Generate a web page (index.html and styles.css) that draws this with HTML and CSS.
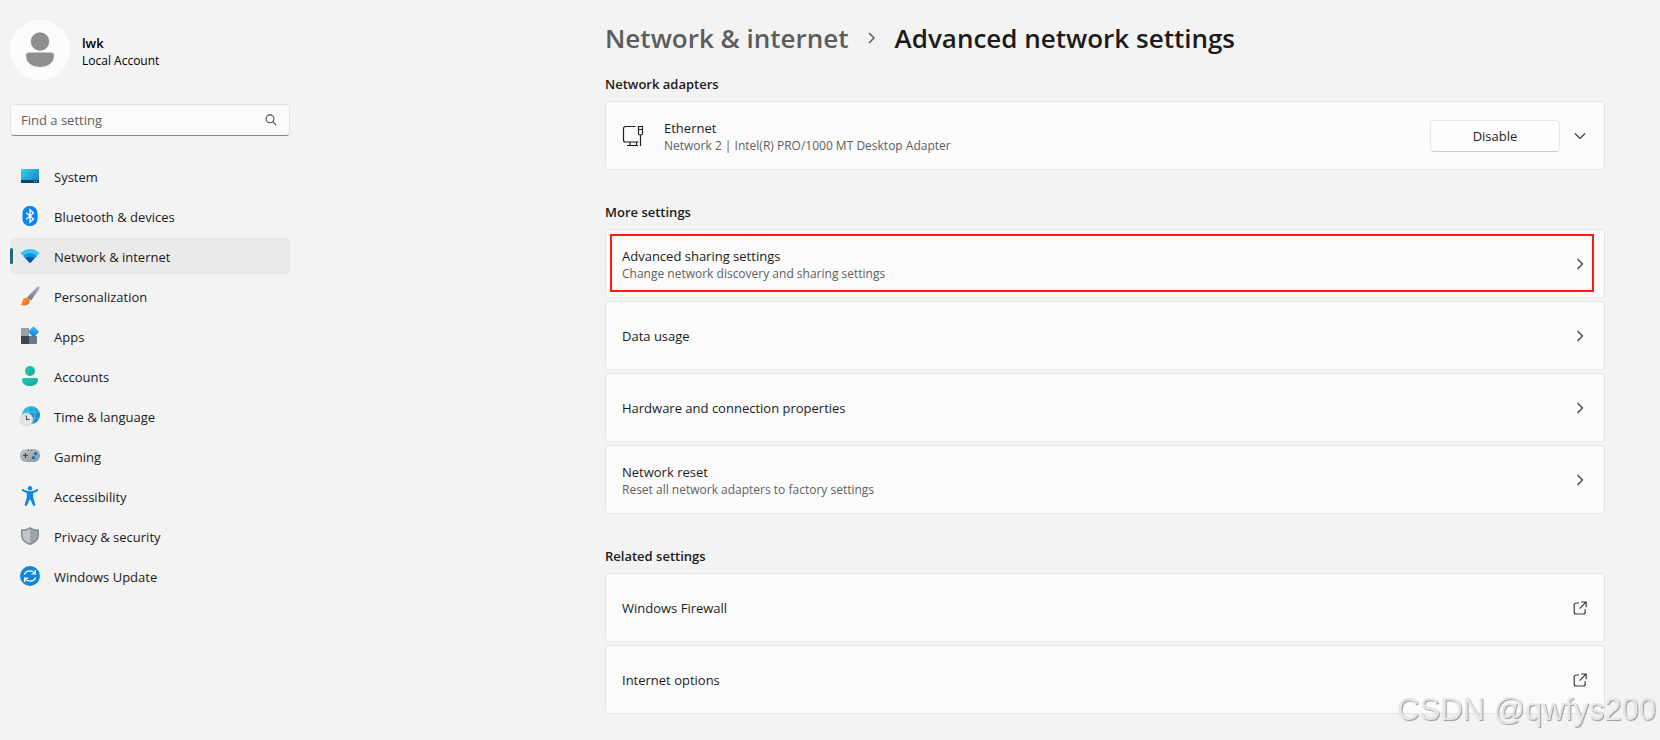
FILE: index.html
```html
<!DOCTYPE html>
<html lang="en">
<head>
    <meta charset="UTF-8">
    <meta name="viewport" content="width=device-width, initial-scale=1.0">
    <title>Settings</title>
    <link rel="stylesheet" href="styles.css">
</head>
<body>
    <div class="layout">
        <aside class="sidebar">
            <!-- Account -->
            <div class="account">
                <svg class="avatar" viewBox="0 0 60 60" aria-hidden="true">
                    <circle cx="30" cy="30" r="30" fill="#fbfbfb"/>
                    <circle cx="30" cy="21.5" r="9.3" fill="#8f8f8f"/>
                    <path d="M19 32.5h22c2 0 3 1.2 3 3 0 7-6 11.5-14 11.5s-14-4.5-14-11.5c0-1.800 1-3 3-3z" fill="#8f8f8f"/>
                </svg>
                <div class="account-text">
                    <div class="account-name">lwk</div>
                    <div class="account-type">Local Account</div>
                </div>
            </div>

            <!-- Search -->
            <form class="search">
                <input type="search" class="search-input" placeholder="Find a setting" aria-label="Find a setting">
                <button type="submit" class="search-button" aria-label="Search">
                    <svg width="12" height="12" viewBox="0 0 12 12" fill="none" stroke="#4a4a4a" stroke-width="1.1">
                        <circle cx="5" cy="4.8" r="3.9"/>
                        <path d="M7.8 7.6l3.4 3.5"/>
                    </svg>
                </button>
            </form>

            <!-- Categories -->
            <nav class="nav">
                <a href="#" class="nav-item">
                    <svg class="nav-icon" viewBox="0 0 20 20">
                        <defs>
                            <linearGradient id="screen" x1="0" y1="0" x2="1" y2="1">
                                <stop offset="0" stop-color="#35d6e6"/>
                                <stop offset="1" stop-color="#0f78c8"/>
                            </linearGradient>
                        </defs>
                        <rect x="1" y="3" width="18" height="14" rx="1" fill="url(#screen)"/>
                        <path d="M1 14h18v2a1 1 0 0 1-1 1H2a1 1 0 0 1-1-1z" fill="#0d4463"/>
                        <path d="M14 15h1v1h-1zM16 15h1v1h-1z" fill="#7fc6e0"/>
                    </svg>
                    <span class="nav-label">System</span>
                </a>
                <a href="#" class="nav-item">
                    <svg class="nav-icon" viewBox="0 0 20 20">
                        <rect x="2.5" y="0" width="15" height="20" rx="7" fill="#0a84f5"/>
                        <path d="M6.2 6.7l7.3 6.3-3.5 3.2V3.8L13.5 7l-7.3 6.3" fill="none" stroke="#fff" stroke-width="1.3"/>
                    </svg>
                    <span class="nav-label">Bluetooth &amp; devices</span>
                </a>
                <a href="#" class="nav-item active">
                    <svg class="nav-icon" viewBox="0 0 20 20">
                        <path d="M10 17L.4 7.200C2.800 4.500 6.200 3 10 3s7.200 1.500 9.600 4.200z" fill="#3cc5f3"/>
                        <path d="M10 17L3.300 10.200C5 8.200 7.300 7 10 7s5 1.200 6.700 3.200z" fill="#1a8fe0"/>
                        <path d="M10 17l-4.300-4.400C6.800 11.500 8.300 10.800 10 10.800s3.200.7 4.300 1.800z" fill="#0f57a8"/>
                    </svg>
                    <span class="nav-label">Network &amp; internet</span>
                </a>
                <a href="#" class="nav-item">
                    <svg class="nav-icon" viewBox="0 0 20 20">
                        <defs>
                            <linearGradient id="handle" x1="1" y1="0" x2="0" y2="1">
                                <stop offset="0" stop-color="#b4bac0"/>
                                <stop offset="1" stop-color="#6a7078"/>
                            </linearGradient>
                            <linearGradient id="bristle" x1="0" y1="0" x2="1" y2="1">
                                <stop offset="0" stop-color="#ffa53a"/>
                                <stop offset="1" stop-color="#ea5f12"/>
                            </linearGradient>
                        </defs>
                        <path d="M7 11.5L17 1.100c1.600-1.500 3.300-.4 2.500 1.600L11 14.500z" fill="url(#handle)"/>
                        <path d="M.5 18.500c2-.4 1.200-3.800 3.200-5.700 1.400-1.300 3.300-1.300 4.800-.1 1.500 1.300 1.600 3.300.4 4.900-1.900 2.400-5.900 2.400-8.400.9z" fill="url(#bristle)"/>
                    </svg>
                    <span class="nav-label">Personalization</span>
                </a>
                <a href="#" class="nav-item">
                    <svg class="nav-icon" viewBox="0 0 20 20">
                        <defs>
                            <linearGradient id="tile" x1="0" y1="0" x2="1" y2="1">
                                <stop offset="0" stop-color="#45c4f5"/>
                                <stop offset="1" stop-color="#0a78dc"/>
                            </linearGradient>
                        </defs>
                        <path d="M1 3a1 1 0 0 1 1-1h7v8H1z" fill="#98a0a8"/>
                        <path d="M1 10h8v8H2a1 1 0 0 1-1-1z" fill="#43474c"/>
                        <path d="M9 10h8v7a1 1 0 0 1-1 1H9z" fill="#72787f"/>
                        <rect x="9.500" y="1.700" width="8" height="8" rx="1" transform="rotate(45 13.500 5.700)" fill="url(#tile)"/>
                    </svg>
                    <span class="nav-label">Apps</span>
                </a>
                <a href="#" class="nav-item">
                    <svg class="nav-icon" viewBox="0 0 20 20">
                        <defs>
                            <linearGradient id="person" x1="0" y1="0" x2="1" y2="1">
                                <stop offset="0" stop-color="#25cdb4"/>
                                <stop offset="1" stop-color="#12a595"/>
                            </linearGradient>
                        </defs>
                        <circle cx="10" cy="5" r="5" fill="url(#person)"/>
                        <path d="M3.500 12h13c1 0 1.500.7 1.500 1.700 0 4-3.500 6.300-8 6.300s-8-2.300-8-6.300c0-1 .5-1.700 1.500-1.700z" fill="url(#person)"/>
                    </svg>
                    <span class="nav-label">Accounts</span>
                </a>
                <a href="#" class="nav-item">
                    <svg class="nav-icon" viewBox="0 0 20 20">
                        <defs>
                            <linearGradient id="globe" x1="0" y1="0" x2="1" y2="1">
                                <stop offset="0" stop-color="#2fc8e0"/>
                                <stop offset="1" stop-color="#0b6fc4"/>
                            </linearGradient>
                        </defs>
                        <circle cx="11" cy="9" r="9" fill="url(#globe)"/>
                        <g fill="none" stroke="#67dcf0" stroke-width="1" opacity=".6">
                            <ellipse cx="11" cy="9" rx="4" ry="8.500"/>
                            <path d="M3 6h16M3 12h16"/>
                        </g>
                        <circle cx="6.500" cy="13.500" r="6.500" fill="#e3e5e7" stroke="#c4c8cc" stroke-width=".5"/>
                        <path d="M6.500 9.500v4h3.200" fill="none" stroke="#4a5056" stroke-width="1.200"/>
                    </svg>
                    <span class="nav-label">Time &amp; language</span>
                </a>
                <a href="#" class="nav-item">
                    <svg class="nav-icon" viewBox="0 0 20 20">
                        <defs>
                            <linearGradient id="pad" x1="0" y1="0" x2="1" y2="1">
                                <stop offset="0" stop-color="#c3c7cb"/>
                                <stop offset="1" stop-color="#8e949b"/>
                            </linearGradient>
                        </defs>
                        <rect x="0" y="3" width="20" height="13" rx="6" fill="url(#pad)"/>
                        <path d="M5.500 7v5M3 9.500h5" stroke="#3a3f45" stroke-width="1.200"/>
                        <path d="M8 4h1v1H8zM11 4h1v1h-1z" fill="#4d5258"/>
                        <circle cx="15.500" cy="7.700" r="1.600" fill="#0b6fc4"/>
                        <circle cx="13.400" cy="11.700" r="1.600" fill="#0b6fc4"/>
                    </svg>
                    <span class="nav-label">Gaming</span>
                </a>
                <a href="#" class="nav-item">
                    <svg class="nav-icon" viewBox="0 0 20 20" fill="#1188dd">
                        <circle cx="10" cy="2.200" r="2.200"/>
                        <path d="M3.200 3.200C5.500 4.500 7.600 5.200 10 5.200s4.500-.7 6.800-2c1.200-.6 1.900 1.200.8 1.900-1.500.9-2.800 1.500-4.400 1.900v4.200l2 7.200c.3 1.600-1.800 2.200-2.400.7L10.500 13.800h-1L7.200 19.100c-.6 1.500-2.700.9-2.400-.7l2-7.200V7C5.200 6.600 3.900 6 2.400 5.100 1.300 4.400 2 2.600 3.200 3.200z"/>
                    </svg>
                    <span class="nav-label">Accessibility</span>
                </a>
                <a href="#" class="nav-item">
                    <svg class="nav-icon" viewBox="0 0 20 20">
                        <path d="M10 1c2.600 1.800 5.600 2.500 9 2.500V9c0 4.800-3.200 8-9 10-5.800-2-9-5.200-9-10V3.500C4.400 3.500 7.400 2.800 10 1z" fill="#858b92"/>
                        <path d="M10 2.800c-2.300 1.500-4.800 2.100-7.500 2.200V9c0 4 2.600 6.600 7.500 8.400z" fill="#c2c6ca"/>
                        <path d="M10 2.800c2.300 1.500 4.800 2.100 7.500 2.200V9c0 4-2.600 6.600-7.500 8.400z" fill="#9ea4aa"/>
                    </svg>
                    <span class="nav-label">Privacy &amp; security</span>
                </a>
                <a href="#" class="nav-item">
                    <svg class="nav-icon" viewBox="0 0 20 20">
                        <circle cx="10" cy="10" r="10" fill="#0f88dc"/>
                        <g fill="none" stroke="#fff" stroke-width="1.300">
                            <path d="M4.400 8.500C5.300 6.200 7.400 4.800 10 4.800c2 0 3.800.9 5 2.600"/>
                            <path d="M15.400 4v3.800h-3.800"/>
                            <path d="M15.600 11.500c-.9 2.300-3 3.700-5.600 3.700-2 0-3.800-.9-5-2.600"/>
                            <path d="M4.600 16v-3.800h3.800"/>
                        </g>
                    </svg>
                    <span class="nav-label">Windows Update</span>
                </a>
            </nav>
        </aside>

        <main class="content">
            <h1 class="page-title">
                <a href="#" class="crumb">Network &amp; internet</a>
                <svg width="8" height="12" viewBox="0 0 8 12" fill="none" stroke="#5d5d5d" stroke-width="1.500" aria-hidden="true"><path d="M1 1l5 5-5 5"/></svg>
                <span>Advanced network settings</span>
            </h1>

            <section class="group">
                <h2 class="group-title">Network adapters</h2>
                <div class="card">
                    <svg class="card-icon" viewBox="0 0 22 22" fill="none" stroke="#1f1f1f" stroke-width="1.200">
                        <path d="M13.500 1.500h-10a2 2 0 0 0-2 2v11.500a2 2 0 0 0 2 2h13"/>
                        <path d="M8 17v3.500M14.500 17v3.500M5 20.500h11M18.500 10v11"/>
                        <path d="M16.500 1.500h4v7a1.500 1.500 0 0 1-1.500 1.500h-1a1.500 1.500 0 0 1-1.500-1.500zM16 4.500h5"/>
                    </svg>
                    <div class="card-text">
                        <div class="card-title">Ethernet</div>
                        <div class="card-note">Network 2 | Intel(R) PRO/1000 MT Desktop Adapter</div>
                    </div>
                    <button type="button" class="button">Disable</button>
                    <button type="button" class="expand" aria-label="Show more">
                        <svg width="14" height="14" viewBox="0 0 14 14" fill="none" stroke="#3a3a3a" stroke-width="1.200"><path d="M2 4.500l5 5 5-5"/></svg>
                    </button>
                </div>
            </section>

            <section class="group">
                <h2 class="group-title">More settings</h2>
                <a href="#" class="card highlight">
                    <div class="card-text">
                        <div class="card-title">Advanced sharing settings</div>
                        <div class="card-note">Change network discovery and sharing settings</div>
                    </div>
                    <svg class="arrow" viewBox="0 0 14 14"><path d="M4.500 2l5 5-5 5"/></svg>
                </a>
                <a href="#" class="card">
                    <div class="card-text">
                        <div class="card-title">Data usage</div>
                    </div>
                    <svg class="arrow" viewBox="0 0 14 14"><path d="M4.500 2l5 5-5 5"/></svg>
                </a>
                <a href="#" class="card">
                    <div class="card-text">
                        <div class="card-title">Hardware and connection properties</div>
                    </div>
                    <svg class="arrow" viewBox="0 0 14 14"><path d="M4.500 2l5 5-5 5"/></svg>
                </a>
                <a href="#" class="card">
                    <div class="card-text">
                        <div class="card-title">Network reset</div>
                        <div class="card-note">Reset all network adapters to factory settings</div>
                    </div>
                    <svg class="arrow" viewBox="0 0 14 14"><path d="M4.500 2l5 5-5 5"/></svg>
                </a>
            </section>

            <section class="group">
                <h2 class="group-title">Related settings</h2>
                <a href="#" class="card">
                    <div class="card-text">
                        <div class="card-title">Windows Firewall</div>
                    </div>
                    <svg class="arrow" viewBox="0 0 14 14"><path d="M6 2H3.200A2 2 0 0 0 1.200 4v7a2 2 0 0 0 2 2h7a2 2 0 0 0 2-2V8M8 1h5.200v5.200M13 1.200L6.500 7.700"/></svg>
                </a>
                <a href="#" class="card">
                    <div class="card-text">
                        <div class="card-title">Internet options</div>
                    </div>
                    <svg class="arrow" viewBox="0 0 14 14"><path d="M6 2H3.200A2 2 0 0 0 1.200 4v7a2 2 0 0 0 2 2h7a2 2 0 0 0 2-2V8M8 1h5.200v5.200M13 1.200L6.500 7.700"/></svg>
                </a>
            </section>
        </main>
    </div>

    <div class="watermark">CSDN @qwfys200</div>
</body>
</html>
```
FILE: styles.css
```css
* {
    box-sizing: border-box;
}

body {
    margin: 0;
    background-color: #f3f3f3;
    color: #1b1b1b;
    font-family: "Segoe UI", "Open Sans", "Noto Sans", sans-serif;
    font-size: 13px;
    line-height: 20px;
}

a {
    color: inherit;
    text-decoration: none;
}

button {
    font: inherit;
    color: inherit;
    cursor: pointer;
}

.layout {
    display: flex;
    justify-content: space-between;
    gap: 32px;
    padding: 20px 55px 20px 10px;
}

/* Sidebar */
.sidebar {
    flex: 0 0 280px;
}

.account {
    display: flex;
    align-items: center;
    gap: 12px;
    color: #000;
    line-height: 18px;
}

.avatar {
    width: 60px;
    height: 60px;
}

.account-text {
    padding-top: 4px;
}

.account-name {
    font-weight: 600;
}

.account-type {
    font-size: 12px;
}

.search {
    display: flex;
    align-items: center;
    height: 32px;
    margin: 24px 0 22px;
    padding: 0 8px 0 10px;
    background-color: #fbfbfb;
    border: 1px solid #e3e3e3;
    border-bottom-color: #868686;
    border-radius: 4px;
}

.search-input {
    flex: 1;
    min-width: 0;
    padding: 0;
    border: none;
    outline: none;
    background: none;
    font: inherit;
}

.search-input::placeholder {
    color: #616161;
    opacity: 1;
}

.search-button {
    display: flex;
    padding: 4px;
    border: none;
    background: none;
}

.nav {
    display: flex;
    flex-direction: column;
    gap: 4px;
}

.nav-item {
    display: flex;
    align-items: center;
    gap: 14px;
    height: 36px;
    padding: 0 10px;
    border-radius: 4px;
}

.nav-icon {
    width: 20px;
    height: 20px;
}

.nav-label {
    padding-top: 2px;
}

.nav-item.active {
    position: relative;
    background-color: #eaeaea;
}

.nav-item.active::before {
    content: "";
    position: absolute;
    left: 0;
    top: 10px;
    width: 3px;
    height: 16px;
    border-radius: 2px;
    background-color: #1f6b75;
}

/* Content */
.content {
    flex: 0 1 1000px;
    min-width: 0;
}

.page-title {
    display: flex;
    align-items: center;
    gap: 19px;
    margin: 0 0 18px;
    font-size: 26px;
    font-weight: 600;
    line-height: 36px;
}

.crumb {
    color: #5d5d5d;
}

.group {
    display: flex;
    flex-direction: column;
    gap: 3px;
    margin-bottom: 32px;
}

.group-title {
    margin: 0 0 4px;
    font-size: 13px;
    font-weight: 600;
    line-height: 20px;
}

.card {
    display: flex;
    align-items: center;
    min-height: 69px;
    padding: 0 17px 0 16px;
    background-color: #fbfbfb;
    border: 1px solid #e5e5e5;
    border-radius: 4px;
}

.card-icon {
    width: 22px;
    height: 22px;
    margin-right: 20px;
}

.card-text {
    flex: 1;
}

.card-title {
    line-height: 20px;
}

.card-note {
    color: #5f5f5f;
    font-size: 12px;
    line-height: 16px;
}

.button {
    width: 130px;
    height: 32px;
    border: 1px solid #e8e8e8;
    border-bottom-color: #cccccc;
    border-radius: 4px;
    background-color: #fefefe;
}

.expand {
    display: flex;
    margin-left: 13px;
    padding: 0;
    border: none;
    background: none;
}

.arrow {
    width: 14px;
    height: 14px;
    fill: none;
    stroke: #3a3a3a;
    stroke-width: 1.2;
}

.highlight {
    position: relative;
}

.highlight::after {
    content: "";
    position: absolute;
    top: 4px;
    right: 10px;
    bottom: 5px;
    left: 4px;
    border: 2px solid #fd1b10;
}

.watermark {
    position: fixed;
    right: 4px;
    bottom: 12px;
    color: #e6e6e6;
    font-family: "Liberation Sans", Arial, sans-serif;
    font-size: 31px;
    line-height: 36px;
    text-shadow: 1px 1px 1px #999999;
    pointer-events: none;
}
```
